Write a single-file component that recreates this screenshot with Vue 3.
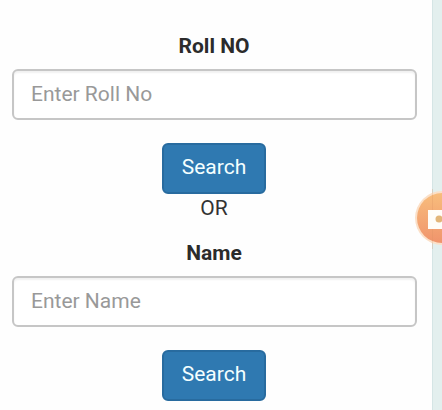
<script setup>
import { ref } from 'vue'

const rollNo = ref('')
const name = ref('')
</script>

<template>
    <div class="wrapper">
        <main class="page">
            <form class="search-form" @submit.prevent>
                <label for="roll">Roll NO</label>
                <input id="roll" v-model="rollNo" class="form-control" type="text" placeholder="Enter Roll No">
                <button class="btn" type="submit">Search</button>
            </form>
            <div class="divider">OR</div>
            <form class="search-form" @submit.prevent>
                <label for="name">Name</label>
                <input id="name" v-model="name" class="form-control" type="text" placeholder="Enter Name">
                <button class="btn" type="submit">Search</button>
            </form>
        </main>
        <!-- floating recorder button -->
        <div class="recorder">
            <svg width="60" height="60" viewBox="0 0 60 60">
                <defs>
                    <linearGradient id="orange" x1="0" y1="0" x2="0" y2="1">
                        <stop offset="0" stop-color="#f8bd7c" />
                        <stop offset="1" stop-color="#f0946c" />
                    </linearGradient>
                </defs>
                <circle cx="29" cy="29" r="27" fill="#fbe0c8" />
                <circle cx="29" cy="29" r="25" fill="url(#orange)" />
                <rect x="19" y="0" width="1" height="60" fill="#d9905f" opacity="0.25" />
                <rect x="15" y="21" width="24" height="19" fill="#fffdf8" />
                <circle cx="26" cy="30" r="3.5" fill="#e3b679" />
            </svg>
        </div>
    </div>
</template>

<style>
body {
    margin: 0;
    overflow: hidden;
}
</style>

<style scoped>
.wrapper {
    position: relative;
    height: 410px;
    overflow: hidden;
    background: #e3efee;
    font-family: Roboto, "Liberation Sans", sans-serif;
    font-size: 21px;
    line-height: 29px;
    color: #333;
}

.page {
    box-sizing: border-box;
    width: 433px;
    height: 100%;
    padding: 32px 15px 0 12px;
    background: #fefefe;
    border-right: 1px solid #d5e5e5;
}

.search-form {
    display: flex;
    flex-direction: column;
    align-items: center;
}

.search-form label {
    margin: 0 1px 8px 0;
    font-weight: bold;
    color: #2b2b2b;
}

.form-control {
    box-sizing: border-box;
    width: 100%;
    height: 51px;
    margin: 0 0 23px;
    padding: 0 17px 2px;
    border: 2px solid #c6c6c6;
    border-radius: 6px;
    background: #fff;
    box-shadow: inset 0 2px 2px rgba(0, 0, 0, 0.06);
    font: inherit;
    color: #555;
}

.form-control::placeholder {
    color: #999;
    opacity: 1;
}

.btn {
    box-sizing: border-box;
    width: 104px;
    height: 51px;
    margin-right: 1px;
    padding: 0 0 2px;
    border: 2px solid #286b9f;
    border-radius: 6px;
    background: #2f79b1;
    font: inherit;
    color: #f4ffff;
}

.divider {
    margin: 0 1px 16px 0;
    text-align: center;
}

.recorder {
    position: absolute;
    top: 189px;
    left: 413px;
}

.recorder svg {
    display: block;
}
</style>
